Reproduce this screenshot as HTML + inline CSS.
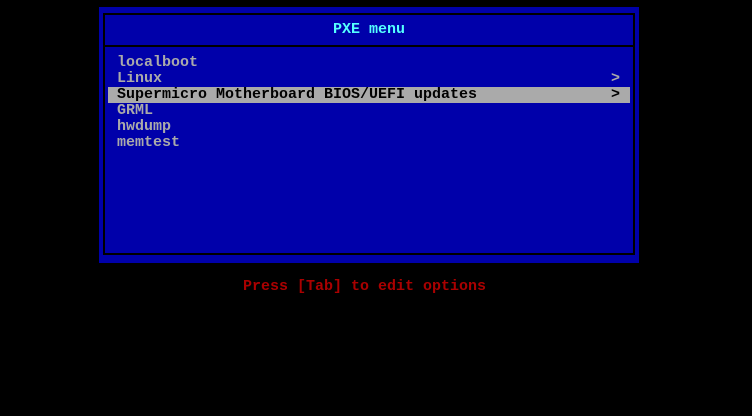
<!DOCTYPE html>
<html><head><style>
html,body{margin:0;padding:0;background:#000;width:752px;height:416px;overflow:hidden;position:relative}
div{position:absolute;box-sizing:border-box}
.t{font-family:"Liberation Mono","DejaVu Sans Mono",monospace;font-size:15px;line-height:16px;white-space:pre;color:#aaaaaa;font-weight:bold}
</style></head><body>
<div style="left:99px;top:7px;width:540px;height:256px;background:#0000aa"></div>
<div style="left:103px;top:13px;width:532px;height:242px;border:2px solid #000"></div>
<div style="left:104px;top:45px;width:530px;height:2px;background:#000"></div>
<div class="t" style="left:333px;top:22px;color:#55ffff">PXE menu</div>
<div style="left:108px;top:87px;width:522px;height:16px;background:#aaaaaa"></div>
<div class="t" style="left:117px;top:55px">localboot</div>
<div class="t" style="left:117px;top:71px">Linux</div>
<div class="t" style="left:611px;top:71px">&gt;</div>
<div class="t" style="left:117px;top:87px;color:#000">Supermicro Motherboard BIOS/UEFI updates</div>
<div class="t" style="left:611px;top:87px;color:#000">&gt;</div>
<div class="t" style="left:117px;top:103px">GRML</div>
<div class="t" style="left:117px;top:119px">hwdump</div>
<div class="t" style="left:117px;top:135px">memtest</div>
<div class="t" style="left:243px;top:279px;color:#aa0000">Press [Tab] to edit options</div>
</body></html>
